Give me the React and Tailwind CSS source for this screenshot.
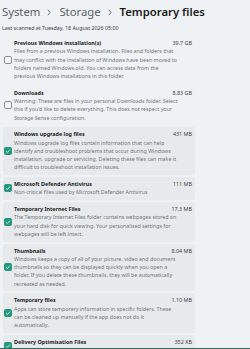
import React from "react";

const items = [
  {
    title: "Previous Windows installation(s)",
    size: "39.7 GB",
    checked: false,
    lines: [
      "Files from a previous Windows installation. Files and folders that",
      "may conflict with the installation of Windows have been moved to",
      "folders named Windows.old. You can access data from the",
      "previous Windows installations in this folder.",
    ],
  },
  {
    title: "Downloads",
    size: "8.83 GB",
    checked: false,
    lines: [
      "Warning: These are files in your personal Downloads folder. Select",
      "this if you'd like to delete everything. This does not respect your",
      "Storage Sense configuration.",
    ],
  },
  {
    title: "Windows upgrade log files",
    size: "431 MB",
    checked: true,
    lines: [
      "Windows upgrade log files contain information that can help",
      "identify and troubleshoot problems that occur during Windows",
      "installation, upgrade or servicing. Deleting these files can make it",
      "difficult to troubleshoot installation issues.",
    ],
  },
  {
    title: "Microsoft Defender Antivirus",
    size: "111 MB",
    checked: true,
    lines: ["Non-critical files used by Microsoft Defender Antivirus"],
  },
  {
    title: "Temporary Internet Files",
    size: "17.3 MB",
    checked: true,
    lines: [
      "The Temporary Internet Files folder contains webpages stored on",
      "your hard disk for quick viewing. Your personalised settings for",
      "webpages will be left intact.",
    ],
  },
  {
    title: "Thumbnails",
    size: "8.04 MB",
    checked: true,
    lines: [
      "Windows keeps a copy of all of your picture, video and document",
      "thumbnails so they can be displayed quickly when you open a",
      "folder. If you delete these thumbnails, they will be automatically",
      "recreated as needed.",
    ],
  },
  {
    title: "Temporary files",
    size: "1.10 MB",
    checked: true,
    lines: [
      "Apps can store temporary information in specific folders. These",
      "can be cleaned up manually if the app does not do it",
      "automatically.",
    ],
  },
  {
    title: "Delivery Optimisation Files",
    size: "352 KB",
    checked: true,
    lines: ["Delivery Optimisation is used to download updates from Microsoft"],
  },
];

function Chevron() {
  return (
    <svg width="4" height="7" viewBox="0 0 4 7" className="ml-[7px] mr-[8px] mt-[1px]">
      <path d="M0.8 0.8 L3.2 3.5 L0.8 6.2" fill="none" stroke="#6b7075" strokeWidth="1" />
    </svg>
  );
}

function Checkbox({ checked }) {
  if (checked) {
    return (
      <div className="w-[8px] h-[8px] shrink-0 rounded-[2px] bg-[#23987a] flex items-center justify-center">
        <svg width="6" height="6" viewBox="0 0 6 6">
          <path d="M1 3.2 L2.4 4.5 L5 1.6" fill="none" stroke="#ffffff" strokeWidth="0.8" />
        </svg>
      </div>
    );
  }
  return <div className="w-[8px] h-[8px] shrink-0 rounded-[2px] border border-[#8b9095] bg-[#f4f6f8]" />;
}

export default function App() {
  return (
    <div
      className="w-[250px] h-[349px] overflow-hidden bg-[#eef2f5] flex flex-col"
      style={{ fontFamily: '"Noto Sans", "Open Sans", sans-serif' }}
    >
      <div className="flex-1 overflow-hidden flex flex-col">
        <div className="flex items-center mt-[2px] ml-[2px] h-[20px] text-[11.3px] leading-[20px] whitespace-nowrap">
          <span className="text-[#5c6166]">System</span>
          <Chevron />
          <span className="text-[#5c6166]">Storage</span>
          <Chevron />
          <span className="text-[#1b1b1b] font-semibold">Temporary files</span>
        </div>
        <div className="mt-[2px] ml-[2px] text-[5.3px] leading-[8px] text-[#3a3d40] whitespace-nowrap">
          Last scanned at Tuesday, 18 August 2026 05:00
        </div>
        <div className="mt-[4px] ml-[3px] w-[192px] flex flex-col gap-[2px]">
          {items.map((it, i) => (
            <div
              key={i}
              className={
                "flex items-center pl-[1px] pr-[3px] pt-[3px] pb-[3.5px] rounded-[3px] " +
                (it.checked ? "bg-[#e6eaed]" : "")
              }
            >
              <Checkbox checked={it.checked} />
              <div className="ml-[2px] flex-1 min-w-0">
                <div className="flex justify-between items-center leading-[8.25px] h-[8.25px]">
                  <span className="text-[5.4px] font-bold text-[#1c1c1c] whitespace-nowrap">{it.title}</span>
                  <span className="text-[5.4px] text-[#3f4347] whitespace-nowrap">{it.size}</span>
                </div>
                {it.lines.map((l, j) => (
                  <div key={j} className="text-[5.3px] leading-[8.25px] h-[8.25px] text-[#72767a] whitespace-nowrap">
                    {l}
                  </div>
                ))}
              </div>
            </div>
          ))}
        </div>
      </div>
      <div className="h-[1px] bg-[#2f6e5e] shrink-0" />
    </div>
  );
}
